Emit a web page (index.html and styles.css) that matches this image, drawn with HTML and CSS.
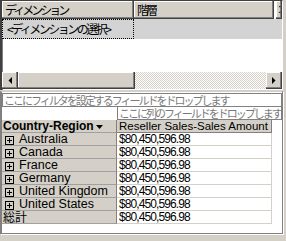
FILE: index.html
```html
<!DOCTYPE html>
<html lang="ja">
<head>
<meta charset="utf-8">
<title>Pivot</title>
<link rel="stylesheet" href="styles.css">
</head>
<body>
<div class="app">
  <div class="top">
    <div class="hdr">
      <div class="hc c1 jp">ディメンション</div>
      <div class="hc c2 jp">階層</div>
      <div class="gapcol"></div>
      <div class="hc c3">:</div>
    </div>
    <div class="selrow">
      <div class="sel jp">&lt;ディメンションの選択&gt;</div>
    </div>
    <div class="blank"></div>
    <div class="hscroll">
      <div class="sbtn"><svg width="4" height="7" viewBox="0 0 4 7"><path d="M4 0V7L0.5 3.5Z" fill="#000"/></svg></div>
      <div class="thumb"></div>
      <div class="track"></div>
      <div class="sbtn"><svg width="4" height="7" viewBox="0 0 4 7"><path d="M0 0V7L3.5 3.5Z" fill="#000"/></svg></div>
    </div>
  </div>
  <div class="bottom">
    <div class="filter jp">ここにフィルタを設定するフィールドをドロップします</div>
    <div class="colrow">
      <div class="corner"></div>
      <div class="coldrop jp">ここに列のフィールドをドロップします</div>
    </div>
    <div class="pivot">
      <div class="rh rhh">Country-Region <svg width="7" height="4" viewBox="0 0 7 4"><path d="M0 0H7L3.5 4Z" fill="#000"/></svg></div>
      <div class="ch">Reseller Sales-Sales Amount</div>

      <div class="rh"><svg class="plus" width="9" height="9" viewBox="0 0 9 9"><rect x="0.5" y="0.5" width="8" height="8" fill="none" stroke="#000"/><path d="M2 4.5H7M4.5 2V7" stroke="#000"/></svg>Australia</div>
      <div class="val">$80,450,596.98</div>
      <div class="rh"><svg class="plus" width="9" height="9" viewBox="0 0 9 9"><rect x="0.5" y="0.5" width="8" height="8" fill="none" stroke="#000"/><path d="M2 4.5H7M4.5 2V7" stroke="#000"/></svg>Canada</div>
      <div class="val">$80,450,596.98</div>
      <div class="rh"><svg class="plus" width="9" height="9" viewBox="0 0 9 9"><rect x="0.5" y="0.5" width="8" height="8" fill="none" stroke="#000"/><path d="M2 4.5H7M4.5 2V7" stroke="#000"/></svg>France</div>
      <div class="val">$80,450,596.98</div>
      <div class="rh"><svg class="plus" width="9" height="9" viewBox="0 0 9 9"><rect x="0.5" y="0.5" width="8" height="8" fill="none" stroke="#000"/><path d="M2 4.5H7M4.5 2V7" stroke="#000"/></svg>Germany</div>
      <div class="val">$80,450,596.98</div>
      <div class="rh"><svg class="plus" width="9" height="9" viewBox="0 0 9 9"><rect x="0.5" y="0.5" width="8" height="8" fill="none" stroke="#000"/><path d="M2 4.5H7M4.5 2V7" stroke="#000"/></svg>United Kingdom</div>
      <div class="val">$80,450,596.98</div>
      <div class="rh"><svg class="plus" width="9" height="9" viewBox="0 0 9 9"><rect x="0.5" y="0.5" width="8" height="8" fill="none" stroke="#000"/><path d="M2 4.5H7M4.5 2V7" stroke="#000"/></svg>United States</div>
      <div class="val">$80,450,596.98</div>
      <div class="rh jp total">総計</div>
      <div class="val">$80,450,596.98</div>
    </div>
  </div>
</div>
</body>
</html>
```

FILE: styles.css
```css
html, body {
  margin: 0;
  padding: 0;
}
body {
  background: #ffffff;
  width: 286px;
  height: 241px;
  overflow: hidden;
  font-family: "Liberation Sans", Arial, sans-serif;
  font-size: 12px;
  color: #000;
}
.jp {
  font-family: "Noto Sans CJK JP", sans-serif;
  letter-spacing: -3px;
}
.app {
  display: flex;
  flex-direction: column;
  width: 286px;
  height: 241px;
  background: #d4d0c8;
}
/* ---------- top panel ---------- */
.top {
  height: 90px;
  width: 283px;
  box-sizing: border-box;
  border-top: 1px solid #404040;
  border-left: 2px solid #404040;
  box-shadow: inset 1px 0 #808080;
  background: #fff;
  display: flex;
  flex-direction: column;
  border-right: 1px solid #fff;
}
.hdr {
  display: flex;
  height: 18px;
  flex: none;
}
.hc {
  background: #d4d0c8;
  box-sizing: border-box;
  box-shadow: inset -1px -1px #404040, inset -2px -2px #808080, inset 1px 1px #fff;
  line-height: 17px;
  padding-left: 3px;
  font-size: 12px;
  overflow: hidden;
  white-space: nowrap;
}
.c1 { width: 132px; }
.c2 { width: 140px; }
.gapcol { width: 2px; background: #fff; }
.c3 { flex: 1; padding-left: 2px; }
.selrow {
  height: 20px;
  flex: none;
  background: #d3d3d3;
  display: flex;
}
.sel {
  width: 132px;
  box-sizing: border-box;
  border: 1px dotted #000;
  line-height: 18px;
  padding-left: 4px;
  font-size: 12px;
  white-space: nowrap;
  letter-spacing: -2.5px;
}
.blank { flex: 1; }
.hscroll {
  height: 17px;
  flex: none;
  display: flex;
  margin-bottom: 1px;
}
.sbtn {
  width: 16px;
  box-sizing: border-box;
  background: #d4d0c8;
  box-shadow: inset -1px -1px #404040, inset -2px -2px #808080, inset 1px 1px #fff;
  display: flex;
  align-items: center;
  justify-content: center;
  padding-right: 1px;
}
.thumb {
  width: 117px;
  box-sizing: border-box;
  background: #d4d0c8;
  box-shadow: inset -1px -1px #404040, inset -2px -2px #808080, inset 1px 1px #fff;
}
.track {
  flex: 1;
  background: repeating-conic-gradient(#d4d0c8 0 25%, #ffffff 0 50%) 0 0 / 2px 2px;
}
/* ---------- bottom panel ---------- */
.bottom {
  margin-top: 1px;
  width: 283px;
  height: 143px;
  box-sizing: border-box;
  background: #fff;
  border-left: 2px solid #808080;
  border-top: 1px solid #d4d0c8;
  border-right: 1px solid #808080;
  border-bottom: 1px solid #808080;
  box-shadow: 1px 1px #fff, 2px 2px #d4d0c8;
  padding-top: 1px;
  display: flex;
  flex-direction: column;
}
.filter {
  height: 14px;
  flex: none;
  box-sizing: border-box;
  border: 1px solid #808080;
  color: #7a7a7a;
  line-height: 12px;
  font-size: 11px;
  letter-spacing: -2px;
  white-space: nowrap;
  overflow: hidden;
  padding-left: 1px;
}
.colrow {
  display: flex;
  height: 13px;
  flex: none;
}
.corner { width: 115px; flex: none; }
.coldrop {
  flex: 1;
  height: 13px;
  box-sizing: border-box;
  border: 1px solid #808080;
  border-top: none;
  color: #7a7a7a;
  line-height: 12px;
  font-size: 11px;
  letter-spacing: -2px;
  white-space: nowrap;
  padding-left: 1px;
}
.pivot {
  display: grid;
  grid-template-columns: 115px 155px;
  grid-auto-rows: 13px;
}
.rh {
  background: #d4d0c8;
  box-sizing: border-box;
  border-bottom: 1px solid #a0a0a0;
  border-right: 1px solid #808080;
  display: flex;
  align-items: flex-end;
  line-height: 12px;
  padding-left: 3px;
  white-space: nowrap;
  font-size: 12.5px;
}
.rhh {
  font-weight: bold;
  font-size: 12px;
  padding-left: 1px;
  align-items: center;
  gap: 2px;
}
.rhh svg { margin-top: 1px; }
.plus { margin-right: 5px; flex: none; }
.total { padding-left: 1px; font-size: 12px; line-height: 12px; letter-spacing: 0; }
.ch {
  background: #d4d0c8;
  box-sizing: border-box;
  border-bottom: 1px solid #808080;
  border-right: 1px solid #808080;
  line-height: 12px;
  padding-left: 2px;
  white-space: nowrap;
  overflow: hidden;
  font-size: 11.5px;
}
.val {
  box-sizing: border-box;
  border-bottom: 1px solid #d4d0c8;
  border-right: 1px solid #d4d0c8;
  line-height: 12px;
  padding-left: 2px;
  letter-spacing: -0.9px;
  font-size: 12px;
  white-space: nowrap;
}
```
